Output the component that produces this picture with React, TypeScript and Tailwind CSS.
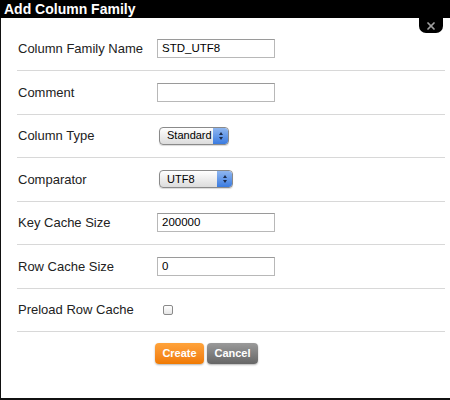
import { X } from 'lucide-react';

const rows: { label: string; kind: 'text' | 'select' | 'check'; value?: string; width?: string }[] = [
  { label: 'Column Family Name', kind: 'text', value: 'STD_UTF8' },
  { label: 'Comment', kind: 'text', value: '' },
  { label: 'Column Type', kind: 'select', value: 'Standard', width: 'w-[70px]' },
  { label: 'Comparator', kind: 'select', value: 'UTF8', width: 'w-[74px]' },
  { label: 'Key Cache Size', kind: 'text', value: '200000' },
  { label: 'Row Cache Size', kind: 'text', value: '0' },
  { label: 'Preload Row Cache', kind: 'check' },
];

function SelectBox({ value, width }: { value: string; width: string }) {
  return (
    <div
      className={`${width} ml-[2px] h-[18px] flex items-center rounded-[4px] border border-[#8a8a8a] bg-gradient-to-b from-white to-[#dcdcdc] shadow-[0_1px_1px_rgba(0,0,0,0.15)] overflow-hidden`}
    >
      <span className="flex-1 pl-[7px] text-[11px] text-black leading-none">{value}</span>
      <span className="w-[15px] h-full flex flex-col items-center justify-center gap-[2px] bg-gradient-to-b from-[#8fb6ef] to-[#3a7be0] rounded-r-[3px]">
        <span className="w-0 h-0 border-x-[2.5px] border-x-transparent border-b-[3px] border-b-[#1b2b4a]" />
        <span className="w-0 h-0 border-x-[2.5px] border-x-transparent border-t-[3px] border-t-[#1b2b4a]" />
      </span>
    </div>
  );
}

export default function App() {
  return (
    <div className="w-[450px] h-[400px] flex flex-col bg-white font-['Liberation_Sans',Arial,sans-serif] text-[#222]">
      {/* Header */}
      <div className="h-[18px] bg-black text-white text-[14px] font-bold leading-[18px] pl-[4px]">
        Add Column Family
      </div>

      <div className="relative flex-1 border-l border-b-2 border-[#111] flex flex-col">
        {/* Close tab */}
        <div className="absolute right-[7px] top-0 w-[24px] h-[15px] bg-black rounded-b-[7px] flex items-center justify-center">
          <X className="w-[12px] h-[12px] text-[#a0a0a0]" strokeWidth={3.5} />
        </div>

        <div className="pl-[16px] pr-[5px] pt-[9.5px]">
          {rows.map((r) => (
            <div key={r.label} className="h-[43.5px] flex items-center border-b border-[#d8d8d8]">
              <span className="w-[140px] text-[13px] pl-[1px]">{r.label}</span>
              {r.kind === 'text' && (
                <div className="w-[118px] h-[19px] border border-[#b8b8b8] border-t-[#9a9a9a] bg-white text-[11.5px] text-black leading-[17px] pl-[4px]">
                  {r.value}
                </div>
              )}
              {r.kind === 'select' && <SelectBox value={r.value!} width={r.width!} />}
              {r.kind === 'check' && (
                <div className="ml-[6px] w-[10px] h-[10px] rounded-[2px] border border-[#8a8a8a] bg-gradient-to-b from-white to-[#e6e6e6]" />
              )}
            </div>
          ))}
        </div>

        <div className="flex gap-[3px] pl-[154px] pt-[11px]">
          <button className="w-[49px] h-[21px] rounded-[4px] bg-gradient-to-b from-[#ffa33a] to-[#f07a00] text-white text-[11px] font-bold shadow-[0_1px_2px_rgba(0,0,0,0.3)]">
            Create
          </button>
          <button className="w-[51px] h-[21px] rounded-[4px] bg-gradient-to-b from-[#9a9a9a] to-[#666] text-white text-[11px] font-bold shadow-[0_1px_2px_rgba(0,0,0,0.3)]">
            Cancel
          </button>
        </div>
      </div>
    </div>
  );
}
